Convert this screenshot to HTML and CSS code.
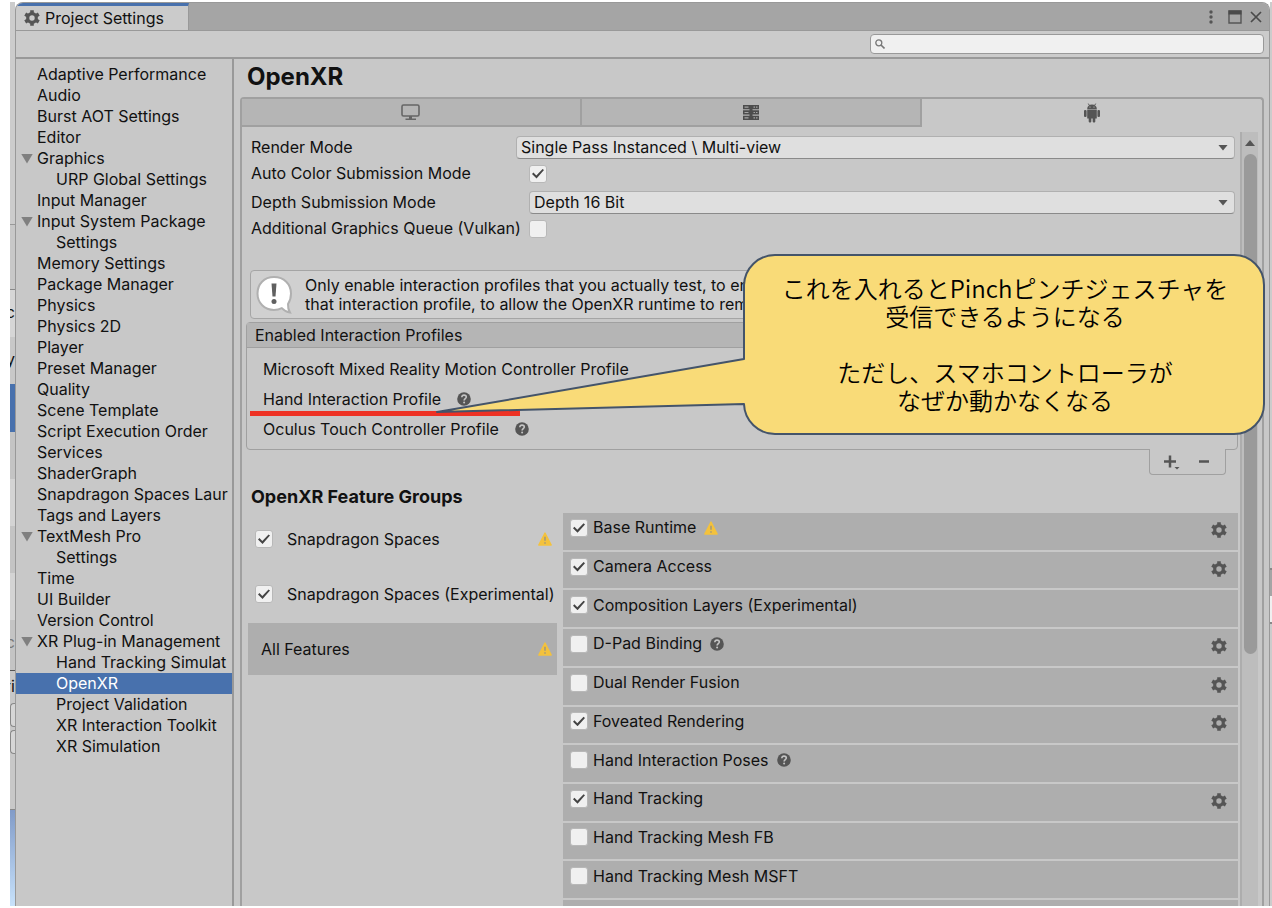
FILE: index.html
```
<!DOCTYPE html>
<html lang="en">
<head>
    <meta charset="UTF-8">
    <meta name="viewport" content="width=device-width, initial-scale=1.0">
    <title>Project Settings</title>
    <link rel="stylesheet" href="styles.css">
</head>

<body>
    <!-- icons -->
    <svg class="sprite" aria-hidden="true">
        <symbol id="gear" viewBox="0 0 16 16">
            <g stroke="currentColor" fill="none">
                <circle cx="8" cy="8" r="4.3" stroke-width="3.2"/>
                <path stroke-width="3.6" stroke-linecap="butt" d="M8 .2v3M8 12.8v3M1.2 4.1l2.6 1.5M12.2 10.4l2.6 1.5M1.2 11.9l2.6-1.5M12.2 5.6l2.6-1.5"/>
            </g>
        </symbol>
        <symbol id="help" viewBox="0 0 14 14">
            <circle cx="7" cy="7" r="6.8" fill="currentColor"/>
            <path d="M4.8 5.3C4.9 3.8 5.8 3.1 7 3.1s2.3.8 2.3 2c0 1.5-2.2 1.7-2.2 3.4" fill="none" stroke="#c4c4c4" stroke-width="1.6"/>
            <circle cx="7.1" cy="10.6" r="1" fill="#c4c4c4"/>
        </symbol>
        <symbol id="warn" viewBox="0 0 14 14">
            <path d="M7 1L13.2 13H.8z" fill="#f4c23c" stroke="#f4c23c" stroke-width="1.4" stroke-linejoin="round"/>
            <path d="M7 4.8v4M7 10.2v1.6" stroke="#a69a78" stroke-width="1.6"/>
        </symbol>
    </svg>

    <div class="screen">
        <!-- sliver of the editor behind the window -->
        <div class="behind-left" aria-hidden="true">
            <div class="strip s1"></div>
            <div class="strip s2"></div>
            <div class="strip s3">c</div>
            <div class="strip s4">ry</div>
            <div class="strip s5"></div>
            <div class="strip s6"></div>
            <div class="strip s7"></div>
            <div class="strip s6"></div>
            <div class="strip s7"></div>
            <div class="strip s8">c</div>
            <div class="strip s9">ri</div>
            <div class="strip s10"></div>
            <div class="strip s10"></div>
            <div class="strip s11"></div>
            <div class="strip s12"></div>
        </div>

        <div class="window">
            <header class="titlebar">
                <div class="window-tab">
                    <svg class="icon-16"><use href="#gear"/></svg>
                    <span>Project Settings</span>
                </div>
                <div class="window-buttons">
                    <button aria-label="Menu"><svg width="4" height="14" viewBox="0 0 4 14"><g fill="#555"><circle cx="2" cy="2" r="1.7"/><circle cx="2" cy="7" r="1.7"/><circle cx="2" cy="12" r="1.7"/></g></svg></button>
                    <button aria-label="Maximize"><svg width="14" height="14" viewBox="0 0 14 14"><path d="M1 1h12v12H1z" fill="none" stroke="#555" stroke-width="1.4"/><path d="M.5.5h13v4H.5z" fill="#4a4a4a"/></svg></button>
                    <button aria-label="Close"><svg width="12" height="12" viewBox="0 0 12 12"><path d="M1 1l10 10M11 1L1 11" stroke="#4a4a4a" stroke-width="1.7"/></svg></button>
                </div>
            </header>

            <div class="toolbar">
                <label class="search">
                    <svg width="10" height="10" viewBox="0 0 10 10"><circle cx="3.8" cy="3.8" r="3" fill="none" stroke="#777" stroke-width="1.3"/><path d="M6 6l3.5 3.5" stroke="#777" stroke-width="1.6"/></svg>
                    <input type="text" aria-label="Search settings">
                </label>
            </div>

            <div class="body">
                <nav class="sidebar">
                    <a href="#">Adaptive Performance</a>
                    <a href="#">Audio</a>
                    <a href="#">Burst AOT Settings</a>
                    <a href="#">Editor</a>
                    <a href="#" class="open">Graphics</a>
                    <a href="#" class="child">URP Global Settings</a>
                    <a href="#">Input Manager</a>
                    <a href="#" class="open">Input System Package</a>
                    <a href="#" class="child">Settings</a>
                    <a href="#">Memory Settings</a>
                    <a href="#">Package Manager</a>
                    <a href="#">Physics</a>
                    <a href="#">Physics 2D</a>
                    <a href="#">Player</a>
                    <a href="#">Preset Manager</a>
                    <a href="#">Quality</a>
                    <a href="#">Scene Template</a>
                    <a href="#">Script Execution Order</a>
                    <a href="#">Services</a>
                    <a href="#">ShaderGraph</a>
                    <a href="#">Snapdragon Spaces Laur</a>
                    <a href="#">Tags and Layers</a>
                    <a href="#" class="open">TextMesh Pro</a>
                    <a href="#" class="child">Settings</a>
                    <a href="#">Time</a>
                    <a href="#">UI Builder</a>
                    <a href="#">Version Control</a>
                    <a href="#" class="open">XR Plug-in Management</a>
                    <a href="#" class="child">Hand Tracking Simulat</a>
                    <a href="#" class="child selected">OpenXR</a>
                    <a href="#" class="child">Project Validation</a>
                    <a href="#" class="child">XR Interaction Toolkit</a>
                    <a href="#" class="child">XR Simulation</a>
                </nav>

                <main class="content">
                    <h1>OpenXR</h1>
                    <div class="panel">
                        <div class="platforms">
                            <button aria-label="Standalone">
                                <svg width="20" height="17" viewBox="0 0 20 17"><rect x="1" y="1" width="17" height="11" rx="1.5" fill="none" stroke="#666" stroke-width="1.6"/><path d="M8 12h3v2.5h4V16H4.5v-1.500H8z" fill="#666"/></svg>
                            </button>
                            <button aria-label="Dedicated Server">
                                <svg width="16" height="15" viewBox="0 0 16 15"><g fill="#4d4d4d"><path d="M0 0h16v4.300H0zM0 5.300h16v4.300H0zM0 10.700h16V15H0z"/><path d="M6.500 0h3v15h-3z"/></g><path d="M1.500 2.200h4M1.500 7.500h4M1.500 12.800h4M10.500 2.200h1.500M13 2.200h1.500M10.500 7.500h1.500M13 7.500h1.500M10.500 12.800h1.500M13 12.800h1.500" stroke="#a5a5a5" stroke-width="1.2"/></svg>
                            </button>
                            <button class="active" aria-label="Android">
                                <svg width="18" height="20" viewBox="0 0 18 20"><g fill="#555"><path d="M4.200 6C4.200 3.200 6.200 1.600 9 1.600S13.800 3.200 13.800 6z"/><path d="M4.200 6.600h9.600v8.900H4.200z"/><rect x="1" y="7" width="2.600" height="7" rx="1.100"/><rect x="14.400" y="7" width="2.600" height="7" rx="1.100"/><rect x="5.700" y="14" width="2.600" height="5.500" rx="1"/><rect x="9.700" y="14" width="2.600" height="5.500" rx="1"/></g><path d="M5.300.600l1.200 2M12.700.600l-1.200 2" stroke="#555"/><circle cx="7" cy="4" r=".6" fill="#c8c8c8"/><circle cx="11" cy="4" r=".6" fill="#c8c8c8"/></svg>
                            </button>
                        </div>

                        <div class="scroll-area">
                            <div class="settings">
                                <div class="fields">
                                    <div class="field">
                                        <label for="render-mode">Render Mode</label>
                                        <div class="dropdown">
                                            <select id="render-mode"><option>Single Pass Instanced \ Multi-view</option></select>
                                        </div>
                                    </div>
                                    <div class="field toggle">
                                        <label for="auto-color">Auto Color Submission Mode</label>
                                        <input type="checkbox" id="auto-color" checked>
                                    </div>
                                    <div class="field wide">
                                        <label for="depth-mode">Depth Submission Mode</label>
                                        <div class="dropdown">
                                            <select id="depth-mode"><option>Depth 16 Bit</option></select>
                                        </div>
                                    </div>
                                    <div class="field toggle">
                                        <label for="extra-queue">Additional Graphics Queue (Vulkan)</label>
                                        <input type="checkbox" id="extra-queue">
                                    </div>
                                </div>

                                <div class="notice">
                                    <svg width="38" height="40" viewBox="0 0 38 40"><path d="M19 2C9 2 2.500 9 2.500 18.500S9.500 35 19 35c3 0 5.500-.6 7.800-1.800 2 2.200 5 4 8.200 4.300-1.500-2.500-2.200-5.500-2-8.500 2-3 3-6.500 3-10.500C36 9 29 2 19 2z" fill="#fff" stroke="#b0b0b0" stroke-width="2"/><path d="M16.500 8.500h5l-1 13h-3z" fill="#606060"/><circle cx="19" cy="26.500" r="2.500" fill="#606060"/></svg>
                                    <p>Only enable interaction profiles that you actually test, to ensure<br>that interaction profile, to allow the OpenXR runtime to remap</p>
                                </div>

                                <section class="profiles">
                                    <h2>Enabled Interaction Profiles</h2>
                                    <ul>
                                        <li>Microsoft Mixed Reality Motion Controller Profile</li>
                                        <li class="marked">Hand Interaction Profile <svg class="icon-14"><use href="#help"/></svg></li>
                                        <li>Oculus Touch Controller Profile <svg class="icon-14"><use href="#help"/></svg></li>
                                    </ul>
                                </section>
                                <div class="list-buttons">
                                    <button aria-label="Add profile"><svg width="18" height="16" viewBox="0 0 18 16"><path d="M8 1.500v12M2 7.500h12" stroke="#555" stroke-width="2.500"/><path d="M12.500 13h5L15 15.500z" fill="#555"/></svg></button>
                                    <button aria-label="Remove profile"><svg width="12" height="16" viewBox="0 0 12 16"><path d="M1 7.500h10" stroke="#555" stroke-width="2.500"/></svg></button>
                                </div>

                                <h3>OpenXR Feature Groups</h3>
                                <div class="features">
                                    <div class="groups">
                                        <div class="group"><input type="checkbox" id="g1" checked><label for="g1">Snapdragon Spaces</label><svg class="icon-14"><use href="#warn"/></svg></div>
                                        <div class="group"><input type="checkbox" id="g2" checked><label for="g2">Snapdragon Spaces (Experimental)</label></div>
                                        <div class="group current"><span>All Features</span><svg class="icon-14"><use href="#warn"/></svg></div>
                                    </div>
                                    <div class="feature-list">
                                        <div class="feature"><input type="checkbox" id="f1" checked><label for="f1">Base Runtime</label><svg class="icon-14"><use href="#warn"/></svg><button aria-label="Base Runtime settings"><svg class="icon-16"><use href="#gear"/></svg></button></div>
                                        <div class="feature"><input type="checkbox" id="f2" checked><label for="f2">Camera Access</label><button aria-label="Camera Access settings"><svg class="icon-16"><use href="#gear"/></svg></button></div>
                                        <div class="feature"><input type="checkbox" id="f3" checked><label for="f3">Composition Layers (Experimental)</label></div>
                                        <div class="feature"><input type="checkbox" id="f4"><label for="f4">D-Pad Binding</label><svg class="icon-14"><use href="#help"/></svg><button aria-label="D-Pad Binding settings"><svg class="icon-16"><use href="#gear"/></svg></button></div>
                                        <div class="feature"><input type="checkbox" id="f5"><label for="f5">Dual Render Fusion</label><button aria-label="Dual Render Fusion settings"><svg class="icon-16"><use href="#gear"/></svg></button></div>
                                        <div class="feature"><input type="checkbox" id="f6" checked><label for="f6">Foveated Rendering</label><button aria-label="Foveated Rendering settings"><svg class="icon-16"><use href="#gear"/></svg></button></div>
                                        <div class="feature"><input type="checkbox" id="f7"><label for="f7">Hand Interaction Poses</label><svg class="icon-14"><use href="#help"/></svg></div>
                                        <div class="feature"><input type="checkbox" id="f8" checked><label for="f8">Hand Tracking</label><button aria-label="Hand Tracking settings"><svg class="icon-16"><use href="#gear"/></svg></button></div>
                                        <div class="feature"><input type="checkbox" id="f9"><label for="f9">Hand Tracking Mesh FB</label></div>
                                        <div class="feature"><input type="checkbox" id="f10"><label for="f10">Hand Tracking Mesh MSFT</label></div>
                                        <div class="feature-next"></div>
                                    </div>
                                </div>
                            </div>
                            <div class="scrollbar">
                                <div class="scroll-up"></div>
                                <div class="scroll-thumb"></div>
                            </div>
                        </div>
                    </div>
                </main>
            </div>
        </div>

        <div class="behind-right" aria-hidden="true">
            <div class="tab-end"></div>
            <div class="field-end"></div>
        </div>

        <!-- speech bubble -->
        <div class="callout" lang="ja">
            <svg viewBox="0 0 832 184" width="832" height="184"><path d="M342 3H800a30 30 0 0 1 30 30V152a30 30 0 0 1-30 30H341a31 31 0 0 1-31-30L3 160 310 107V33a31 31 0 0 1 31-30z" fill="#f9db78" stroke="#44546a" stroke-width="2" stroke-linejoin="round"/></svg>
            <div class="callout-text">
                <p>これを入れるとPinchピンチジェスチャを<br>受信できるようになる</p>
                <p>ただし、スマホコントローラが<br>なぜか動かなくなる</p>
            </div>
        </div>
    </div>
</body>
</html>
```
FILE: styles.css
```
* {
    margin: 0;
    padding: 0;
    box-sizing: border-box;
}

body {
    background: #fff;
    color: #111;
    font-family: Inter, "Noto Sans CJK JP", sans-serif;
    font-size: 16px;
    line-height: 21px;
    overflow: hidden;
}

button {
    background: none;
    border: none;
    display: flex;
    align-items: center;
    justify-content: center;
    cursor: pointer;
}

.sprite {
    display: none;
}

.icon-16 {
    width: 16px;
    height: 16px;
    color: #555;
    flex: none;
}

.icon-14 {
    width: 14px;
    height: 14px;
    color: #555;
    flex: none;
}

.screen {
    position: relative;
    display: flex;
    height: 100vh;
    padding: 2px 0 2px 10px;
}

/* editor behind the window */
.behind-left {
    width: 5px;
    flex: none;
    display: flex;
    flex-direction: column;
    background: #c8c8c8;
    overflow: hidden;
}

.strip {
    flex: none;
    overflow: hidden;
    direction: rtl;
    white-space: nowrap;
}

.s1 { height: 223px; border-bottom: 1px solid #999; background: #ccc; }
.s2 { height: 65px; border-bottom: 1px solid #888; }
.s3 { height: 47px; padding-top: 12px; background: #d6d6d6; }
.s4 { height: 47px; padding-top: 12px; }
.s5 { height: 48px; background: #4871ad; }
.s6 { height: 47px; background: #c4c4c4; }
.s7 { height: 47px; background: #d4d4d4; }
.s8 { height: 51px; padding-top: 12px; color: #777; background: #c4c4c4; border-bottom: 1px solid #555; }
.s9 { height: 32px; padding-top: 5px; }
.s10 { height: 24px; margin-bottom: 3px; background: #d6d6d6; border: 1px solid #888; border-right: none; border-radius: 4px 0 0 4px; }
.s11 { height: 53px; border-bottom: 1px solid #888; }
.s12 { flex: 1; background: linear-gradient(#819bc8, #c8e2fb); }

.behind-right {
    width: 2px;
    flex: none;
    padding-top: 566px;
    background: #ccc;
    overflow: hidden;
}

.tab-end {
    height: 28px;
    border-top: 2px solid #888;
    background: #a5a5a5;
}

.field-end {
    height: 28px;
    background: #f0f0f0;
    border-bottom: 2px solid #888;
}

/* window */
.window {
    flex: 1;
    min-width: 0;
    display: flex;
    flex-direction: column;
    background: #c8c8c8;
    border: 1px solid #999;
    border-bottom: none;
    border-radius: 8px 8px 0 0;
    overflow: hidden;
}

.titlebar {
    display: flex;
    justify-content: space-between;
    height: 28px;
    flex: none;
    background: #a5a5a5;
    border-bottom: 1px solid #999;
}

.window-tab {
    display: flex;
    align-items: center;
    gap: 5px;
    padding: 0 24px 0 8px;
    background: #cbcbcb;
    border-top: 3px solid #4871ad;
    border-right: 1px solid #999;
    white-space: nowrap;
}

.window-buttons {
    display: flex;
    align-items: center;
    gap: 8px;
    padding-right: 7px;
}

.window-buttons button:first-child {
    margin-right: 7px;
}

.toolbar {
    display: flex;
    justify-content: flex-end;
    align-items: center;
    flex: none;
    height: 28px;
    padding-right: 5px;
    background: #cbcbcb;
    border-bottom: 2px solid #999;
}

.search {
    display: flex;
    align-items: center;
    gap: 6px;
    width: 394px;
    height: 20px;
    padding: 0 4px;
    background: #f0f0f0;
    border: 1px solid #999;
    border-radius: 4px;
}

.search input {
    flex: 1;
    min-width: 0;
    border: none;
    outline: none;
    background: none;
    font: inherit;
}

.body {
    flex: 1;
    min-height: 0;
    display: flex;
}

/* sidebar */
.sidebar {
    width: 218px;
    flex: none;
    padding-top: 5px;
    border-right: 2px solid #999;
    overflow: hidden;
}

.sidebar a {
    display: flex;
    align-items: center;
    height: 21px;
    padding-left: 21px;
    color: #111;
    text-decoration: none;
    white-space: nowrap;
}

.sidebar a.open {
    gap: 4px;
    padding-left: 5px;
}

.sidebar a.open::before {
    content: "";
    width: 12px;
    height: 10px;
    background: #808080;
    clip-path: polygon(0 0, 100% 0, 50% 100%);
}

.sidebar a.child {
    padding-left: 40px;
}

.sidebar a.selected {
    background: #4871ad;
    color: #fff;
}

/* main */
.content {
    flex: 1;
    min-width: 0;
    display: flex;
    flex-direction: column;
    padding: 2px 5px 0 6px;
}

h1 {
    padding: 0 7px;
    height: 36px;
    line-height: 31px;
    font-size: 24px;
    font-weight: 700;
}

.panel {
    flex: 1;
    min-height: 0;
    display: flex;
    flex-direction: column;
    border: 2px solid #a0a0a0;
    border-bottom: none;
    border-radius: 4px 4px 0 0;
}

.platforms {
    display: grid;
    grid-template-columns: repeat(3, 1fr);
    height: 28px;
    flex: none;
}

.platforms button {
    background: #b5b5b5;
    border-right: 2px solid #a0a0a0;
    border-bottom: 2px solid #a0a0a0;
}

.platforms button.active {
    background: none;
    border: none;
}

.scroll-area {
    flex: 1;
    min-height: 0;
    display: flex;
    padding: 5px 4px 0;
}

.settings {
    flex: 1;
    min-width: 0;
    display: flex;
    flex-direction: column;
    padding-right: 2px;
}

.fields {
    display: flex;
    flex-direction: column;
    gap: 3px;
    padding: 4px 3px 0 5px;
}

.field {
    display: flex;
    align-items: center;
    height: 23px;
    white-space: nowrap;
}

.field label {
    width: 265px;
    flex: none;
}

.field.toggle {
    height: 26px;
    padding-bottom: 3px;
}

.field.toggle label,
.field.wide label {
    width: 278px;
}

.dropdown {
    flex: 1;
    display: grid;
    align-items: center;
}

.dropdown::after {
    content: "";
    grid-area: 1 / 1;
    justify-self: end;
    width: 10px;
    height: 6px;
    margin-right: 7px;
    background: #555;
    clip-path: polygon(0 0, 100% 0, 50% 100%);
    pointer-events: none;
}

select {
    grid-area: 1 / 1;
    appearance: none;
    width: 100%;
    height: 23px;
    padding: 0 4px;
    background: #dfdfdf;
    border: 1px solid #b0b0b0;
    border-bottom-color: #8a8a8a;
    border-radius: 4px;
    font: inherit;
    color: #111;
}

input[type="checkbox"] {
    appearance: none;
    width: 18px;
    height: 18px;
    flex: none;
    display: grid;
    place-items: center;
    background: #f0f0f0;
    border: 1px solid #b8b8b8;
    border-radius: 3px;
}

input[type="checkbox"]:checked::before {
    content: "";
    width: 12px;
    height: 10px;
    background: #444;
    clip-path: polygon(0 54%, 12% 40%, 36% 70%, 88% 4%, 100% 16%, 38% 100%);
}

.notice {
    display: flex;
    align-items: center;
    gap: 12px;
    height: 49px;
    margin: 27px 3px 0 4px;
    padding: 0 4px;
    background: #d0d0d0;
    border: 1px solid #a5a5a5;
    border-radius: 4px;
    line-height: 19px;
    white-space: nowrap;
    overflow: hidden;
}

.notice svg {
    flex: none;
}

.profiles {
    margin-top: 3px;
    border: 1px solid #a0a0a0;
    border-radius: 4px;
}

.profiles h2 {
    height: 25px;
    padding: 0 8px;
    background: #b5b5b5;
    border-bottom: 1px solid #a0a0a0;
    font-size: 16px;
    font-weight: 400;
    line-height: 25px;
}

.profiles ul {
    padding: 6px 0 5px;
    list-style: none;
}

.profiles li {
    position: relative;
    display: flex;
    align-items: center;
    gap: 16px;
    height: 30px;
    padding-left: 16px;
}

/* red underline */
.profiles li.marked::after {
    content: "";
    position: absolute;
    left: 3px;
    bottom: -2px;
    width: 270px;
    height: 5px;
    background: #ee3224;
}

.list-buttons {
    align-self: flex-end;
    display: flex;
    gap: 18px;
    height: 26px;
    margin: -1px 12px 0 0;
    padding: 0 15px 0 12px;
    background: #c8c8c8;
    border: 1px solid #a0a0a0;
    border-top: none;
    border-radius: 0 0 4px 4px;
}

h3 {
    padding: 0 5px;
    height: 38px;
    line-height: 44px;
    font-size: 18px;
    font-weight: 700;
}

.features {
    flex: 1;
    min-height: 0;
    display: grid;
    grid-template-columns: 309px 1fr;
    gap: 6px;
    padding-left: 2px;
}

.groups {
    display: flex;
    flex-direction: column;
    gap: 3px;
}

.group {
    display: flex;
    align-items: center;
    gap: 14px;
    height: 52px;
    padding: 0 5px 0 7px;
    white-space: nowrap;
}

.group .icon-14 {
    margin-left: auto;
}

.group.current {
    padding-left: 13px;
    background: #aeaeae;
}

/* the last row is cut off by the window edge */
.feature-list {
    display: grid;
    grid-template-rows: repeat(10, 1fr) 6px;
    gap: 2px;
}

.feature {
    display: flex;
    align-items: center;
    gap: 5px;
    padding: 0 11px 7px 7px;
    background: #aeaeae;
    white-space: nowrap;
}

.feature .icon-14 {
    margin-left: 3px;
}

.feature button {
    margin: 4px 0 0 auto;
}

.feature-next {
    background: #aeaeae;
}

.scrollbar {
    width: 18px;
    flex: none;
    display: flex;
    flex-direction: column;
    align-items: center;
    background: #bdbdbd;
    border-left: 2px solid #adadad;
}

.scroll-up {
    width: 10px;
    height: 6px;
    margin: 8px 0;
    background: #555;
    clip-path: polygon(50% 0, 100% 100%, 0 100%);
}

.scroll-thumb {
    width: 13px;
    height: 500px;
    background: #9a9a9a;
    border-radius: 7px;
}

/* speech bubble */
.callout {
    position: absolute;
    top: 252px;
    right: 6px;
    width: 832px;
    color: #000;
}

.callout svg {
    display: block;
}

.callout-text {
    position: absolute;
    inset: 0 0 0 310px;
    display: flex;
    flex-direction: column;
    justify-content: center;
    gap: 28px;
    font-family: "Noto Sans CJK JP", sans-serif;
    font-size: 24px;
    font-weight: 350;
    line-height: 28px;
    text-align: center;
    white-space: nowrap;
}
```
